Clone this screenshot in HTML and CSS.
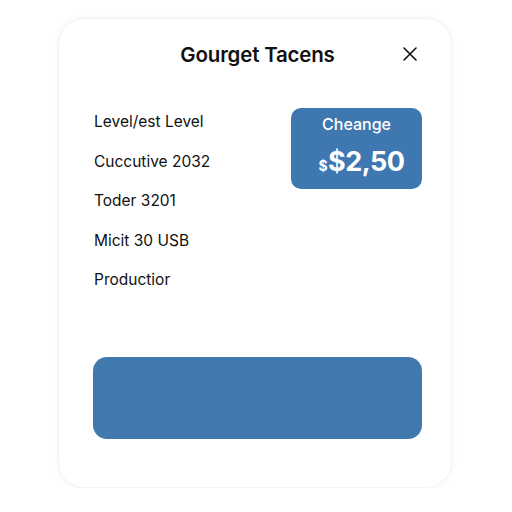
FILE: index.html
```html
<!DOCTYPE html>
<html lang="en">
<head>
    <meta charset="UTF-8">
    <meta name="viewport" content="width=device-width, initial-scale=1.0">
    <title>Gourget Tacens</title>
    <link rel="stylesheet" href="styles.css">
</head>
<body>
    <div class="card">
        <div class="head">
            <h1>Gourget Tacens</h1>
            <button class="close" aria-label="Close">
                <svg width="14" height="14" viewBox="0 0 14 14"><path d="M1 1L13 13M13 1L1 13" stroke="#111" stroke-width="1.6" stroke-linecap="round"/></svg>
            </button>
        </div>

        <div class="body">
            <ul class="items">
                <li>Level/est Level</li>
                <li>Cuccutive 2032</li>
                <li>Toder 3201</li>
                <li>Micit 30 USB</li>
                <li>Productior</li>
            </ul>
            <div class="price">
                <div class="price-label">Cheange</div>
                <div class="price-value"><span class="cur">$</span>$2,50</div>
            </div>
        </div>

        <button class="action"></button>
    </div>
</body>
</html>
```

FILE: styles.css
```css
body { margin: 0; background: #fff; font-family: Inter, "Liberation Sans", sans-serif; color: #111; }
.card { width: 394px; height: 470px; margin: 18px 0 0 58px; box-sizing: border-box; padding: 23px 30px 0 35px; border-radius: 26px; background: #fff; box-shadow: 0 0 6px rgba(0,0,0,0.05); border: 1px solid #f4f4f4; }
.head { position: relative; height: 24px; display: flex; justify-content: center; align-items: center; }
.head h1 { margin: 0; font-size: 20.5px; font-weight: 600; letter-spacing: -0.2px; }
.close { position: absolute; right: 4px; top: 5px; background: none; border: 0; padding: 0; width: 14px; height: 14px; }
.body { display: flex; justify-content: space-between; margin-top: 46px; }
.items { list-style: none; margin: 0; padding: 0; }
.items li { font-size: 15.5px; height: 39.5px; line-height: 19px; }
.price { width: 131px; height: 81px; box-sizing: border-box; background: #3f78b1; border-radius: 10px; color: #fff; text-align: center; padding-top: 6px; margin-top: -4px; margin-right: -1px; }
.price-label { font-size: 16px; font-weight: 500; }
.price-value { font-size: 27px; font-weight: 700; margin-top: 11px; padding-left: 10px; letter-spacing: -0.5px; }
.price-value .cur { font-size: 14px; margin-right: 1px; }
.action { display: block; width: 329px; height: 82px; margin: 47px 0 0 -1px; border: 0; border-radius: 14px; background: #4179af; }
```
